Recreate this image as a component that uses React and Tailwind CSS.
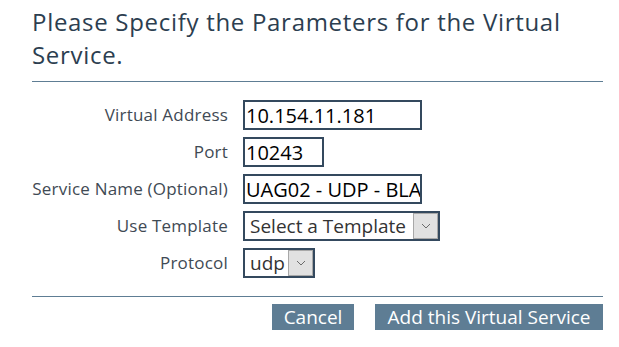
import React from "react";

const ROWS = [
  { label: "Virtual Address", kind: "input", value: "10.154.11.181", width: "w-[179px]" },
  { label: "Port", kind: "input", value: "10243", width: "w-[81px]" },
  { label: "Service Name (Optional)", kind: "input", value: "UAG02 - UDP - BLAST", width: "w-[179px]" },
  { label: "Use Template", kind: "select", value: "Select a Template", width: "w-[197px]" },
  { label: "Protocol", kind: "select", value: "udp", width: "w-[72px]" },
];

function Chevron() {
  return (
    <svg width="10" height="6" viewBox="0 0 10 6" fill="none">
      <path d="M1 1l4 4 4-4" stroke="#6b6b6b" strokeWidth="1" />
    </svg>
  );
}

function Field({ row }) {
  if (row.kind === "select") {
    return (
      <div className={`${row.width} h-[30px] border-2 border-[#34495e] bg-white flex items-stretch`}>
        <span className="flex-1 pl-[5px] text-[19px] leading-[26px] text-[#333] whitespace-nowrap overflow-hidden">
          {row.value}
        </span>
        <span className="w-[25px] bg-[#e1e1e1] border border-[#a8a8a8] flex items-center justify-center">
          <Chevron />
        </span>
      </div>
    );
  }
  return (
    <input
      readOnly
      value={row.value}
      className={`${row.width} h-[30px] border-2 border-[#34495e] bg-white pl-[1px] text-[20px] leading-[26px] text-black outline-none font-['Open_Sans',sans-serif]`}
    />
  );
}

export default function App() {
  return (
    <div className="w-[619px] h-[347px] bg-white px-[32px] pt-[5px] font-['Open_Sans',sans-serif] overflow-hidden">
      <h1 className="text-[24px] leading-[33px] tracking-[0.7px] text-[#2c3e50] w-[571px]">
        Please Specify the Parameters for the Virtual Service.
      </h1>
      <div className="mt-[10px] h-px w-[571px] bg-[#5e7d94]" />

      <div className="mt-[18px] flex flex-col gap-[7px]">
        {ROWS.map((row) => (
          <div key={row.label} className="flex items-center gap-[15px]">
            <span className="w-[196px] text-right text-[17px] tracking-[0.2px] text-[#3f4a54] whitespace-nowrap">
              {row.label}
            </span>
            <Field row={row} />
          </div>
        ))}
      </div>

      <div className="mt-[18px] h-px w-[571px] bg-[#5e7d94]" />
      <div className="mt-[7px] w-[571px] flex justify-end gap-[21px]">
        <button className="h-[26px] w-[82px] bg-[#5e7d94] text-white text-[19px] leading-[26px]">Cancel</button>
        <button className="h-[26px] w-[228px] bg-[#5e7d94] text-white text-[19px] leading-[26px]">
          Add this Virtual Service
        </button>
      </div>
    </div>
  );
}
